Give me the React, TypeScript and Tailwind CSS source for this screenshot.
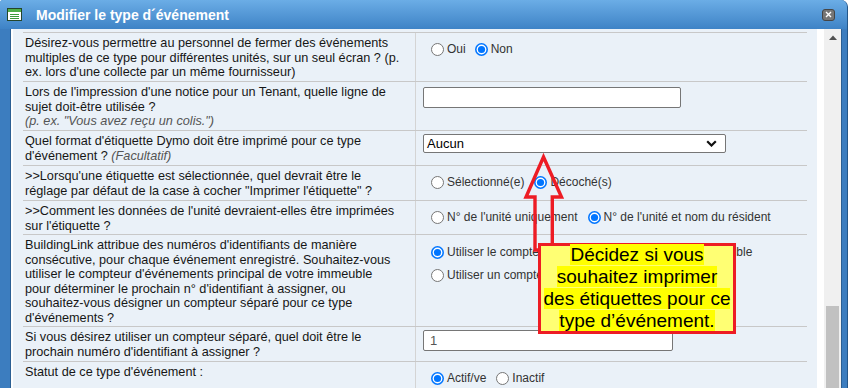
import React from "react";

function Radio({ checked }: { checked?: boolean }) {
  return checked ? (
    <svg width="13" height="13" viewBox="0 0 13 13" className="shrink-0">
      <circle cx="6.5" cy="6.5" r="6.5" fill="#0075ff" />
      <circle cx="6.5" cy="6.5" r="4.9" fill="#ffffff" />
      <circle cx="6.5" cy="6.5" r="3.6" fill="#0075ff" />
    </svg>
  ) : (
    <svg width="13" height="13" viewBox="0 0 13 13" className="shrink-0">
      <circle cx="6.5" cy="6.5" r="6" fill="#ffffff" stroke="#767676" strokeWidth="1" />
    </svg>
  );
}

function Opt({ checked, label }: { checked?: boolean; label: string }) {
  return (
    <div className="flex h-[14px] items-center">
      <Radio checked={checked} />
      <span className="ml-[3px] whitespace-nowrap text-[12px] leading-[14px] text-[#333333]">{label}</span>
    </div>
  );
}

function Row({
  hClass,
  label,
  children,
  valueClass,
}: {
  hClass: string;
  label: React.ReactNode;
  children?: React.ReactNode;
  valueClass: string;
}) {
  return (
    <div className={`flex border-t border-[#c8c8c8] ${hClass}`}>
      <div className="w-[393px] shrink-0 border-r border-[#d4d4d4] pl-[2px] pt-[3px] text-[12.7px] leading-[14.5px] text-[#161616] whitespace-nowrap">
        {label}
      </div>
      <div className={`flex-1 ${valueClass}`}>{children}</div>
    </div>
  );
}

export default function App() {
  return (
    <div className="relative h-[388px] w-[850px] overflow-hidden bg-white font-['Liberation_Sans',Arial,sans-serif]">
      <div className="flex h-[388px] w-[848px] flex-col overflow-hidden rounded-tr-[7px] rounded-tl-[3px] border-r border-[#24578a] bg-[#3c7dbf]">
        {/* Title bar */}
        <div className="flex h-[29px] shrink-0 items-center bg-gradient-to-b from-[#6badE6] to-[#3e83c6] pl-[7px] pr-[12px]">
          <svg width="15" height="13" viewBox="0 0 15 13" className="shrink-0">
            <rect x="0.5" y="0.5" width="14" height="12" fill="#ffffff" stroke="#24452a" />
            <rect x="1" y="1" width="13" height="3" fill="#4fae48" />
            <rect x="3" y="6" width="9" height="1" fill="#3b9a3b" />
            <rect x="3" y="8" width="9" height="1" fill="#3b9a3b" />
            <rect x="3" y="10" width="9" height="1" fill="#3b9a3b" />
          </svg>
          <span className="ml-[14px] text-[14px] font-bold leading-[16px] text-white">Modifier le type d´événement</span>
          <div className="flex-1" />
          <div className="flex h-[12px] w-[13px] items-center justify-center rounded-[3px] border border-[#454545] bg-[#767676]">
            <svg width="7" height="7" viewBox="0 0 7 7">
              <path d="M1 1 L6 6 M6 1 L1 6" stroke="#ffffff" strokeWidth="1.4" />
            </svg>
          </div>
        </div>

        {/* Body */}
        <div className="flex min-h-0 flex-1">
          <div className="w-[11px] shrink-0 border-r border-[#2b5f93] bg-[#3c7dbf]" />
          <div className="flex min-w-0 flex-1 bg-white pl-[2px]">
            <div className="flex w-[804px] shrink-0 flex-col bg-[#eaf1f8] px-[10px] pt-[3px]">
              <Row
                hClass="h-[49px]"
                valueClass="pl-[15px] pt-[9px]"
                label={
                  <>
                    Désirez-vous permettre au personnel de fermer des événements
                    <br />
                    multiples de ce type pour différentes unités, sur un seul écran ? (p.
                    <br />
                    ex. lors d'une collecte par un même fournisseur)
                  </>
                }
              >
                <div className="flex gap-[9px]">
                  <Opt label="Oui" />
                  <Opt checked label="Non" />
                </div>
              </Row>
              <Row
                hClass="h-[49px]"
                valueClass="pl-[7px] pt-[3px]"
                label={
                  <>
                    Lors de l'impression d'une notice pour un Tenant, quelle ligne de
                    <br />
                    sujet doit-être utilisée ?
                    <br />
                    <span className="italic text-[#555555]">(p. ex. "Vous avez reçu un colis.")</span>
                  </>
                }
              >
                <input
                  readOnly
                  value=""
                  className="h-[21px] w-[258px] rounded-[2px] border border-[#767676] bg-white"
                />
              </Row>
              <Row
                hClass="h-[35px]"
                valueClass="pl-[7px] pt-[3px]"
                label={
                  <>
                    Quel format d'étiquette Dymo doit être imprimé pour ce type
                    <br />
                    d'événement ? <span className="italic text-[#555555]">(Facultatif)</span>
                  </>
                }
              >
                <div className="flex h-[19px] w-[303px] items-center justify-between rounded-[2px] border border-[#767676] bg-white pl-[3px] pr-[8px]">
                  <span className="text-[13px] leading-[15px] text-black">Aucun</span>
                  <svg width="11" height="7" viewBox="0 0 11 7">
                    <path d="M1.2 1.2 L5.5 5.5 L9.8 1.2" fill="none" stroke="#111111" strokeWidth="2.2" />
                  </svg>
                </div>
              </Row>
              <Row
                hClass="h-[35px]"
                valueClass="pl-[15px] pt-[9px]"
                label={
                  <>
                    &gt;&gt;Lorsqu'une étiquette est sélectionnée, quel devrait être le
                    <br />
                    réglage par défaut de la case à cocher "Imprimer l'étiquette" ?
                  </>
                }
              >
                <div className="flex gap-[10px]">
                  <Opt label="Sélectionné(e)" />
                  <Opt checked label="Décoché(s)" />
                </div>
              </Row>
              <Row
                hClass="h-[34px]"
                valueClass="pl-[15px] pt-[9px]"
                label={
                  <>
                    &gt;&gt;Comment les données de l'unité devraient-elles être imprimées
                    <br />
                    sur l'étiquette ?
                  </>
                }
              >
                <div className="flex gap-[10px]">
                  <Opt label="N° de l'unité uniquement" />
                  <Opt checked label="N° de l'unité et nom du résident" />
                </div>
              </Row>
              <Row
                hClass="h-[92px]"
                valueClass="pl-[15px] pt-[10px]"
                label={
                  <>
                    BuildingLink attribue des numéros d'identifiants de manière
                    <br />
                    consécutive, pour chaque événement enregistré. Souhaitez-vous
                    <br />
                    utiliser le compteur d'événements principal de votre immeuble
                    <br />
                    pour déterminer le prochain n° d'identifiant à assigner, ou
                    <br />
                    souhaitez-vous désigner un compteur séparé pour ce type
                    <br />
                    d'événements ?
                  </>
                }
              >
                <div className="flex flex-col gap-[9px]">
                  <Opt checked label="Utiliser le compteur d'événements principal de l'immeuble" />
                  <Opt label="Utiliser un compteur séparé" />
                </div>
              </Row>
              <Row
                hClass="h-[35px]"
                valueClass="pl-[7px] pt-[3px]"
                label={
                  <>
                    Si vous désirez utiliser un compteur séparé, quel doit être le
                    <br />
                    prochain numéro d'identifiant à assigner ?
                  </>
                }
              >
                <div className="flex h-[21px] w-[250px] items-center rounded-[2px] border border-[#767676] bg-white pl-[6px] text-[13px] text-[#555555]">
                  1
                </div>
              </Row>
              <Row hClass="flex-1" valueClass="pl-[15px] pt-[9px]" label={<>Statut de ce type d'événement :</>}>
                <div className="flex gap-[10px]">
                  <Opt checked label="Actif/ve" />
                  <Opt label="Inactif" />
                </div>
              </Row>
            </div>
            <div className="w-[7px] shrink-0 bg-white" />
            {/* Scrollbar */}
            <div className="flex w-[17px] shrink-0 flex-col bg-[#f0f0f0]">
              <div className="flex h-[17px] shrink-0 items-center justify-center">
                <svg width="8" height="5" viewBox="0 0 8 5">
                  <path d="M0 5 L4 0.5 L8 5 Z" fill="#505050" />
                </svg>
              </div>
              <div className="h-[260px] shrink-0" />
              <div className="mx-[2px] flex-1 bg-[#c1c1c1]" />
            </div>
          </div>
          <div className="w-[6px] shrink-0 border-l border-[#2b5f93] bg-[#3c7dbf]" />
        </div>
      </div>

      {/* Callout arrow */}
      <svg className="pointer-events-none absolute left-0 top-0" width="850" height="388" viewBox="0 0 850 388">
        <polygon
          points="543.5,157 561.5,197 552.3,197 552.3,250 535,250 535,197 526,197"
          fill="none"
          stroke="#ed1c24"
          strokeWidth="3.4"
          strokeLinejoin="miter"
        />
      </svg>

      {/* Callout box */}
      <div className="absolute left-[538px] top-[243px] h-[91px] w-[198px] border-[3px] border-[#ed1c24] bg-[#ffff73]">
        <div className="-mt-[2px] text-center text-[19px] leading-[22px] text-black">
          <span className="bg-[#ffff00]">Décidez si vous</span>
          <br />
          <span className="bg-[#ffff00]">souhaitez imprimer</span>
          <br />
          <span className="bg-[#ffff00]">des étiquettes pour ce</span>
          <br />
          <span className="bg-[#ffff00]">type d’événement.</span>
        </div>
      </div>
    </div>
  );
}
